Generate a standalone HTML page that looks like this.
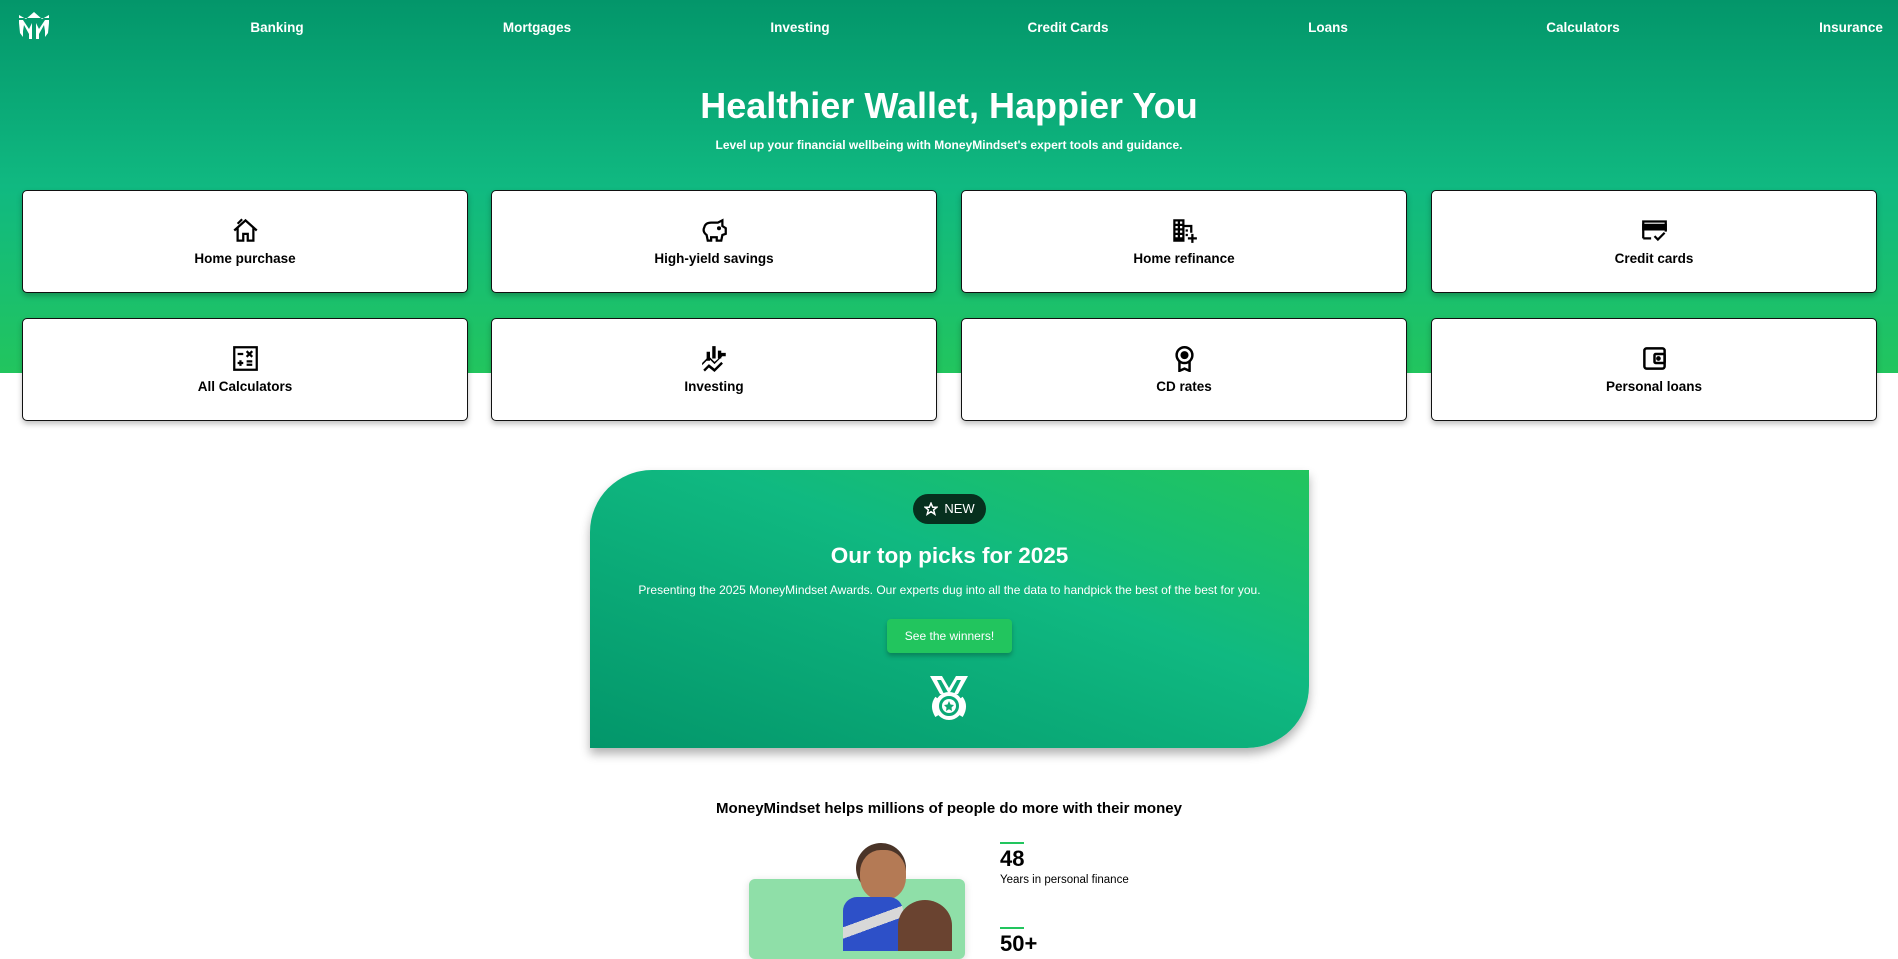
<!DOCTYPE html>
<html><head><meta charset="utf-8">
<style>
*{box-sizing:border-box;margin:0;padding:0}
body{width:1898px;height:951px;overflow:hidden;background:#fff;font-family:"Liberation Sans",Arial,sans-serif;position:relative}
.hero{position:absolute;left:0;top:0;width:1898px;height:373px;background:linear-gradient(180deg,#03966a 0%,#10b981 50%,#22c55e 100%)}
.nav a{position:absolute;top:20px;color:#fff;font-weight:bold;font-size:13.5px;text-decoration:none;transform:translateX(-50%);white-space:nowrap}
h1{position:absolute;top:85px;left:0;width:1898px;text-align:center;color:#fff;font-size:36px;font-weight:bold}
.sub{position:absolute;top:138px;left:0;width:1898px;text-align:center;color:#fff;font-size:12px;font-weight:bold}
.card{position:absolute;width:446px;height:103px;background:#fff;border:1px solid #111;border-radius:5px;box-shadow:0 3px 6px rgba(0,0,0,.25);text-align:center}
.card svg{position:absolute;left:209px;top:26px;width:27px;height:27px}
.card span{position:absolute;left:0;width:100%;top:60px;font-size:13.5px;font-weight:bold;color:#000}
.banner{position:absolute;left:590px;top:470px;width:719px;height:278px;border-radius:62px 0 62px 0;background:linear-gradient(200deg,#22c55e 0%,#10b981 40%,#03966a 100%);box-shadow:0 6px 10px rgba(0,0,0,.3);text-align:center;color:#fff}
.badge{position:absolute;left:323px;top:24px;width:73px;height:30px;border-radius:15px;background:#06301e;font-size:13px;line-height:30px;padding-left:20px}
.badge svg{position:absolute;left:11px;top:8px}
.banner h2{position:absolute;top:73px;width:100%;font-size:22.5px;font-weight:bold}
.banner p{position:absolute;top:113px;width:100%;font-size:12px}
.btn{position:absolute;left:297px;top:149px;width:125px;height:34px;background:#22c55e;border-radius:4px;box-shadow:0 3px 5px rgba(0,0,0,.25);font-size:12px;line-height:34px}
.medal{position:absolute;left:335px;top:204px}
.h3{position:absolute;top:800px;left:0;width:1898px;text-align:center;font-size:15px;font-weight:bold;color:#000}
.pic{position:absolute;left:749px;top:879px;width:216px;height:80px;background:#8fdfa8;border-radius:6px;box-shadow:0 2px 8px rgba(0,0,0,.15)}
.stat{position:absolute;left:1000px}
.stat i{display:block;width:24px;height:2px;background:#22c55e}
.stat b{display:block;font-size:22px;margin-top:2px;color:#000}
.stat small{display:block;font-size:11.5px;margin-top:2px;color:#000}
</style></head><body>
<div class="hero"></div>
<svg style="position:absolute;left:18px;top:11px" width="32" height="30" viewBox="0 0 32 30" fill="#fff"><path d="M1 4 L8 8 L16 1 L24 8 L31 4 L31 7 L1 7Z"/><path d="M1 9 L5 9 L11 18 L14 12 L14 28 L11 28 L11 23 L6 14 L5 20 L5 26 L2 22 L1 12Z"/><path d="M31 9 L27 9 L21 18 L18 12 L18 28 L21 28 L21 23 L26 14 L27 20 L27 26 L30 22 L31 12Z"/></svg>
<div class="nav">
<a style="left:277px">Banking</a><a style="left:537px">Mortgages</a><a style="left:800px">Investing</a><a style="left:1068px">Credit Cards</a><a style="left:1328px">Loans</a><a style="left:1583px">Calculators</a><a style="left:1851px">Insurance</a>
</div>
<h1>Healthier Wallet, Happier You</h1>
<div class="sub">Level up your financial wellbeing with MoneyMindset's expert tools and guidance.</div>

<div class="card" style="left:22px;top:190px"><svg viewBox="0 0 24 24" fill="none" stroke="#000" stroke-width="2"><path d="M2 12 L12 3 L22 12 M5 10 V21 H10 V15 H14 V21 H19 V10"/><path d="M5 6 L9 2" /></svg><span>Home purchase</span></div>
<div class="card" style="left:491px;top:190px"><svg viewBox="0 0 24 24" fill="none" stroke="#000" stroke-width="2"><path d="M3 9 Q4 5 9 5 H15 L19 3 V8 L22 10 V15 L19 16 L18 21 H14 V18 H9 V21 H6 L5 16 Q1 13 3 9Z"/><circle cx="16" cy="10" r=".8" fill="#000"/></svg><span>High-yield savings</span></div>
<div class="card" style="left:961px;top:190px"><svg viewBox="0 0 24 24" fill="#000"><path d="M2 2 H12 V7 H19 V14 H17 V9 H12 V22 H2Z M4 4 V6 H6 V4Z M8 4 V6 H10 V4Z M4 8 V10 H6 V8Z M8 8 V10 H10 V8Z M4 12 V14 H6 V12Z M8 12 V14 H10 V12Z M4 16 V18 H6 V16Z M8 16 V18 H10 V16Z"/><path d="M18 15 H20 V18 H23 V20 H20 V23 H18 V20 H15 V18 H18Z"/><rect x="13" y="11" width="2" height="2"/><rect x="13" y="15" width="2" height="2"/></svg><span>Home refinance</span></div>
<div class="card" style="left:1431px;top:190px"><svg viewBox="0 0 24 24" fill="none" stroke="#000" stroke-width="2"><path d="M2 19 V4 H22 V13 M2 19 H9"/><rect x="2" y="7" width="20" height="4" fill="#000"/><path d="M12 17 L15 20 L21 14"/></svg><span>Credit cards</span></div>
<div class="card" style="left:22px;top:318px"><svg viewBox="0 0 24 24" fill="none" stroke="#000" stroke-width="2"><rect x="2" y="2" width="20" height="20"/><path d="M5 8 H10 M13 5.5 L18 10.5 M18 5.5 L13 10.5 M5 16 H10 M7.5 13.5 V18.5 M13 14.5 H18 M13 17.5 H18"/></svg><span>All Calculators</span></div>
<div class="card" style="left:491px;top:318px"><svg viewBox="0 0 24 24" fill="#000"><path d="M5 6 H8 V14 H5Z M10 1 H13 V12 H10Z M15 5 H18 V12 H15Z"/><path d="M1 18 L7 12 L12 17 L19 10 L22 10 L22 7 L17 7 L17 10 L18 10 L12 15 L7 10 L1 16Z"/><path d="M2 22 L7 17 L12 21 L18 15 L19.5 16.5 L12 24 L7 20 L3.5 23.5Z"/></svg><span>Investing</span></div>
<div class="card" style="left:961px;top:318px"><svg viewBox="0 0 24 24" fill="none" stroke="#000" stroke-width="2.2"><circle cx="12" cy="9" r="7"/><circle cx="12" cy="9" r="2.5" fill="#000"/><path d="M7.5 14.5 V23 L12 21 L16.5 23 V14.5"/></svg><span>CD rates</span></div>
<div class="card" style="left:1431px;top:318px"><svg viewBox="0 0 24 24" fill="none" stroke="#000" stroke-width="2.2"><rect x="3" y="3" width="18" height="18" rx="2"/><rect x="12" y="8" width="9" height="8" rx="1"/><circle cx="15.5" cy="12" r="1" fill="#000"/></svg><span>Personal loans</span></div>

<div class="banner">
<div class="badge"><svg width="14" height="14" viewBox="0 0 24 24" fill="none" stroke="#fff" stroke-width="2.5"><path d="M12 2 L15 9 L22 9 L16.5 13.5 L18.5 21 L12 16.5 L5.5 21 L7.5 13.5 L2 9 L9 9Z"/></svg>NEW</div>
<h2>Our top picks for 2025</h2>
<p>Presenting the 2025 MoneyMindset Awards. Our experts dug into all the data to handpick the best of the best for you.</p>
<div class="btn">See the winners!</div>
<svg class="medal" width="48" height="48" viewBox="0 0 48 48"><path d="M5 2 H17 L24 14 L31 2 H43 L33 20 H29 L36 6 H32 L24 20 L16 6 H12 L19 20 H15Z" fill="#fff"/><circle cx="24" cy="32" r="12" fill="none" stroke="#fff" stroke-width="4"/><circle cx="24" cy="32" r="7" fill="#fff"/><path d="M24 27 L25.5 30.5 L29 31 L26.5 33.5 L27 37 L24 35.3 L21 37 L21.5 33.5 L19 31 L22.5 30.5Z" fill="#0fa874"/><path d="M12 24 Q6 32 12 42" fill="none" stroke="#fff" stroke-width="4"/><path d="M36 24 Q42 32 36 42" fill="none" stroke="#fff" stroke-width="4"/></svg>
</div>

<div class="h3">MoneyMindset helps millions of people do more with their money</div>
<div class="pic"></div>
<div style="position:absolute;left:856px;top:843px;width:50px;height:50px;border-radius:50%;background:#4a3428"></div>
<div style="position:absolute;left:860px;top:850px;width:46px;height:50px;border-radius:45%;background:#b47a55"></div>
<div style="position:absolute;left:843px;top:897px;width:60px;height:54px;border-radius:14px 14px 0 0;background:linear-gradient(160deg,#2d50c8 0 40%,#d8d8d8 40% 55%,#2d50c8 55%)"></div>
<div style="position:absolute;left:898px;top:900px;width:54px;height:51px;border-radius:50% 50% 0 0;background:#6a4330"></div>
<div class="stat" style="top:842px"><i></i><b>48</b><small>Years in personal finance</small></div>
<div class="stat" style="top:927px"><i></i><b>50+</b></div>
</body></html>
